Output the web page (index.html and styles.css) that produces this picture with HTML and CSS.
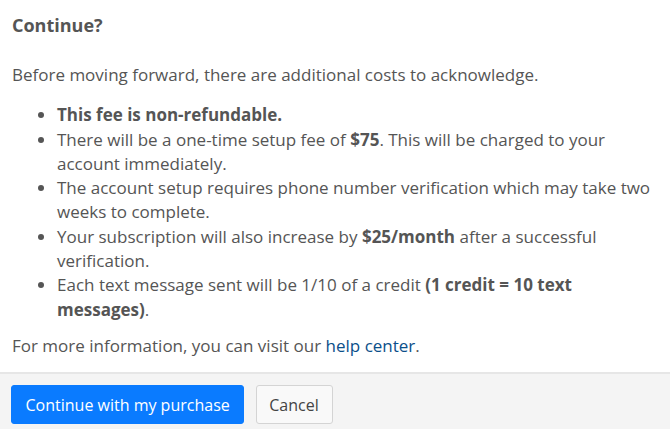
FILE: index.html
```html
<!DOCTYPE html>
<html>
<head>
<meta charset="utf-8">
<link rel="stylesheet" href="styles.css">
</head>
<body>
<div class="modal">
  <div class="modal-header">
    <h2 class="modal-title">Continue?</h2>
  </div>
  <div class="modal-body">
    <p class="intro">Before moving forward, there are additional costs to acknowledge.</p>
    <ul class="cost-list">
      <li><strong>This fee is non-refundable.</strong></li>
      <li>There will be a one-time setup fee of <strong>$75</strong>. This will be charged to your account immediately.</li>
      <li>The account setup requires phone number verification which may take two weeks to complete.</li>
      <li>Your subscription will also increase by <strong>$25/month</strong> after a successful verification.</li>
      <li>Each text message sent will be 1/10 of a credit <strong>(1 credit = 10 text messages)</strong>.</li>
    </ul>
    <p class="more">For more information, you can visit our <a class="link" href="#">help center</a>.</p>
  </div>
  <div class="modal-footer">
    <button class="btn btn-primary">Continue with my purchase</button>
    <button class="btn btn-default">Cancel</button>
  </div>
</div>
</body>
</html>
```
FILE: styles.css
```css
html, body {
  margin: 0;
  padding: 0;
  background: #fff;
}
body {
  font-family: "Open Sans", "Liberation Sans", sans-serif;
  font-size: 17px;
  line-height: 1.428571;
  color: #555;
}
.modal {
  width: 670px;
  height: 429px;
  display: flex;
  flex-direction: column;
}
.modal-header {
  padding: 13px 12px 0;
}
.modal-title {
  margin: 0;
  font-size: 18px;
  line-height: 24px;
  font-weight: 700;
  color: #555;
}
.modal-body {
  padding: 26px 12px 0;
  flex: 1;
}
.intro {
  margin: 0 0 16px;
}
.cost-list {
  margin: 0 0 12px;
  padding-left: 45px;
}
.cost-list li {
  margin: 0;
}
.cost-list strong, .more strong {
  font-weight: 700;
  color: #555;
}
.more {
  margin: 0;
}
.link {
  color: #0b4f8a;
  text-decoration: none;
}
.modal-footer {
  flex: none;
  background: #f4f4f4;
  border-top: 2px solid #e6e6e6;
  padding: 11px 11px 0;
  height: 44px;
  display: flex;
  align-items: flex-start;
  gap: 12px;
}
.btn {
  font-family: "Open Sans", "Liberation Sans", sans-serif;
  font-size: 16px;
  line-height: 22px;
  height: 39px;
  border-radius: 3px;
  cursor: pointer;
}
.btn-primary {
  background: #0a7bff;
  color: #fff;
  border: 1px solid #0a7bff;
  padding: 0 13.5px;
}
.btn-default {
  background: #f9f9f9;
  color: #444;
  border: 1px solid #d4d4d4;
  padding: 0 13px 0 12px;
}
```
